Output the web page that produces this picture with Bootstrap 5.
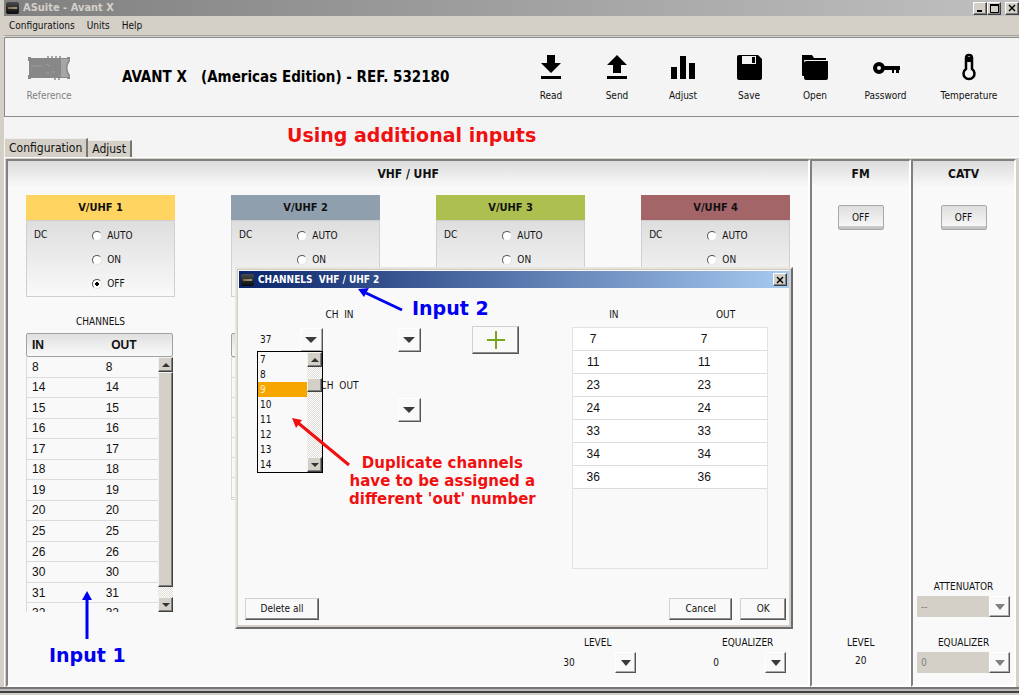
<!DOCTYPE html>
<html lang="en">
<head>
<meta charset="utf-8">
<meta name="viewport" content="width=device-width, initial-scale=1">
<title>ASuite - Avant X</title>
<link href="https://cdn.jsdelivr.net/npm/bootstrap@5.3.0/dist/css/bootstrap.min.css" rel="stylesheet">
<style>
  :root { --face: #d4d0c8; --paper: #f9f9f9; --line: #d9d9d9; }
  body { font: 10px/14px "DejaVu Sans Condensed", "DejaVu Sans", sans-serif; font-stretch: condensed; color: #111; background: var(--face); }
  button, select, input { font: inherit; color: inherit; }
  button { padding: 0; }
  .app { border-left: 4px solid var(--face); box-shadow: inset 1px 0 #fff; }
  .app-title { height: 16px; background: linear-gradient(90deg, #808080, #c0c0c0); color: var(--face); font-weight: bold; font-size: 11px; }
  .app-icon { width: 13px; height: 12px; margin: 0 4px 0 2px; border-radius: 2px; background: linear-gradient(90deg, #8a6a2c, #9a9a9a) center / 9px 2px no-repeat, linear-gradient(#4a4a4a, #0c0c0c); }
  .win-btn { width: 14px; height: 13px; background: var(--face); border: 1px solid; border-color: #fff #404040 #404040 #fff; box-shadow: inset -1px -1px #808080; display: flex; align-items: center; justify-content: center; }
  .menu { height: 20px; background: var(--face); border-bottom: 1px solid #a5a29b; padding-left: 5px; }
  .menu a { color: #111; text-decoration: none; }
  .toolbar { height: 80px; margin-top: 1px; background: #f4f4f4; border: 1px solid #8c8c8c; border-right: 0; padding: 2px 4px 0 11px; }
  .tool { width: 66px; border: 0; background: none; display: flex; flex-direction: column; align-items: center; gap: 6px; }
  .tool svg { height: 30px; width: 30px; }
  .tool .unit-pic { width: 42px; }
  .tool-ref:disabled { color: #808080; }
  .tool-pass { width: 75px; } .tool-temp { width: 92px; }
  .product { font-size: 15px; font-weight: bold; line-height: 18px; padding-bottom: 2px; white-space: pre; margin-left: 40px; color: #000; }
  .tabstrip { height: 41px; background: #f4f4f4; border-bottom: 1px solid #fff; padding-left: 1px; }
  .tab { border: 0; border-top: 1px solid #eee; border-right: 2px solid #77756f; background: var(--face); font-size: 12px; height: 19px; padding: 0 4px; }
  .tab-low { height: 17px; }
  .note { font-family: "DejaVu Sans", sans-serif; font-stretch: normal; font-weight: bold; color: #f01010; white-space: nowrap; }
  .note-big { font-size: 19px; line-height: 22px; }
  .note-mid { font-size: 15px; line-height: 18px; }
  .blue { color: #0000f0; }
  .panels { display: grid; grid-template-columns: 805fr 101fr 105fr; border-top: 1px solid var(--face); border-right: 3px solid var(--face); margin-left: 2px; height: calc(100vh - 166px); min-height: 529px; }
  .panel { background: linear-gradient(#dcdcdc, var(--paper) 26px) var(--paper); border: 2px solid; border-color: #808080 #fff #fff #808080; min-width: 0; }
  .panel-head { font-size: 12px; font-weight: bold; text-align: center; line-height: 16px; padding-top: 5px; }
  .inputs { display: grid; grid-template-columns: repeat(4, 1fr); gap: 56px; padding: 13px 18px 0; }
  .in-head { height: 25px; line-height: 26px; font-weight: bold; font-size: 11px; text-align: center; }
  .in-body { height: 77px; border: 1px solid #cfcfcf; background: linear-gradient(#dedede, var(--paper)); padding: 3px 0 0 7px; }
  .c1 { background: #ffd460; } .c2 { background: #8f9fae; } .c3 { background: #adbf4e; } .c4 { background: #a46569; }
  .dc-opts { margin-left: 45px; }
  .dc-opts label { display: flex; align-items: center; gap: 5px; height: 24px; }
  .dc-opts input { appearance: none; width: 10px; height: 10px; margin: 0; border-radius: 50%; background: #fff; border: 1px solid; border-color: #555 #e4e4e4 #e4e4e4 #555; }
  .dc-opts input:checked { background: radial-gradient(circle, #000 2px, #fff 2px); }
  .chan-title { text-align: center; line-height: 14px; padding: 18px 0 4px; }
  .grid-head { width: calc(100% - 2px); height: 24px; border: 1px solid #a2a2a2; border-radius: 2px; background: linear-gradient(#e0e0e0, var(--paper)); }
  .grid-head .first { width: 58%; }
  .head-only { margin-top: 36px; }
  .grid-box { width: calc(100% - 2px); }
  .empty-rows { height: 143px; border: 1px solid var(--line); background: repeating-linear-gradient(transparent 0 19px, #dcdcdc 19px 20px); }
  .nums { font-family: "Liberation Sans", Arial, sans-serif; font-stretch: normal; font-size: 12px; border-collapse: separate; border-spacing: 0; width: 100%; }
  .nums th, .nums td { padding: 0; font-weight: inherit; }
  .nums thead th { font-weight: bold; }
  .list-clip { height: 255px; overflow: hidden; flex: 1; border-left: 1px solid var(--line); }
  .list-clip .nums { height: 267px; }
  .nums tbody td { border-bottom: 1px solid #dcdcdc; line-height: 16px; }
  .nums .first { padding-left: 5px; }
  .list-clip .first { width: 60%; }
  .sbar { width: 15px; display: flex; flex-direction: column; background: repeating-conic-gradient(#fff 0 25%, #dedbd4 0 50%) 0 0 / 2px 2px; }
  .sbar button, .sbar .thumb { background: var(--face); border: 1px solid; border-color: #f2f2ee #404040 #404040 #f2f2ee; box-shadow: inset -1px -1px #808080; }
  .sbar .thumb { height: 215px; }
  .sbar button { height: 15px; display: flex; align-items: center; justify-content: center; flex: none; }
  .combo { position: relative; display: block; height: 21px; }
  .combo select { appearance: none; width: 100%; height: 100%; border: 0; background: transparent; padding: 0 4px; outline: 0; opacity: 1; }
  .combo::after { content: ""; position: absolute; right: 0; top: 0; width: 21px; height: 100%; background: var(--paper); border: 1px solid; border-color: #fff #555 #555 #fff; box-shadow: inset -1px -1px #aaa; pointer-events: none; }
  .combo::before { content: ""; position: absolute; z-index: 1; right: 5px; top: calc(50% - 3px); border: 5px solid transparent; border-top: 6px solid #3a3a3a; border-bottom: 0; pointer-events: none; }
  .combo.dim { background: var(--face); color: #808080; } .combo.dim::before { border-top-color: #808080; }
  .combo-tall { height: 24px; width: 65px; } .combo-tall::after { width: 23px; } .combo-tall::before { right: 6px; border-left-width: 6px; border-right-width: 6px; }
  .combo-tall select { padding: 0 2px; }
  .levels { padding: 0 22px 12px 0; gap: 73px; }
  .levels .combo { width: 77px; }
  .levels label, .side label { line-height: 14px; display: block; text-align: center; margin-bottom: 2px; }
  .catv-foot { padding: 0 4px 12px; }
  .fm-foot { padding-bottom: 17px; }
  .gap-under { margin-bottom: 19px; }
  .toggle { width: 46px; height: 25px; border: 1px solid #a8a8a8; border-radius: 2px; background: linear-gradient(#dedede, #f6f6f6 85%, #c4c4c4 90%); margin: 23px auto 0; display: block; }
  .win { position: absolute; left: 227px; right: 15px; top: 106px; height: 362px; background: var(--paper); border: 2px solid; border-color: #e8e5dd #6c6c6c #6c6c6c #e8e5dd; box-shadow: inset 1px 1px #d0ccc4, inset -2px -2px var(--face); padding: 2px; display: flex; flex-direction: column; z-index: 2; }
  .win-title { height: 17px; background: linear-gradient(90deg, #0a246a, #a6caf0); color: #fff; font-weight: bold; white-space: pre; padding-right: 2px; }
  .win-body { display: flex; justify-content: space-between; padding: 20px 21px 0 19px; }
  .ch-block { width: 163px; position: relative; }
  .ch-row { margin-top: 6px; }
  .ch-out { margin-top: 27px; margin-bottom: 5px; }
  .raised { background: var(--paper); border: 1px solid; border-color: #d5d2cc #555 #555 #d5d2cc; box-shadow: inset -1px -1px #8c8c8c; height: 22px; }
  .w-del { width: 74px; } .w-cancel { width: 63px; } .w-ok { width: 46px; }
  .win-foot { padding: 0 3px 5px 6px; }
  .add { width: 47px; height: 28px; margin: 18px 0 0 51px; display: flex; align-items: center; justify-content: center; }
  .drop { position: absolute; left: -1px; top: 43px; width: 66px; height: 122px; border: 1px solid #000; background: var(--paper); display: flex; z-index: 3; }
  .drop ul { flex: 1; margin: 0; padding: 0; list-style: none; }
  .drop li { height: 15px; line-height: 16px; padding-left: 2px; }
  .drop li.on { background: #f7a600; color: #fff3c0; }
  .drop .thumb { height: 14px; margin-top: 11px; }
  .map { width: 196px; }
  .map-heads { justify-content: space-between; padding: 0 33px 0 37px; }
  .map-box { height: 242px; margin-top: 5px; border: 1px solid #e2e2e2; }
  .map-box td { height: 23px; background: #fff; text-align: center; }
  .map-box td:first-child { width: 86px; padding-right: 46px; } .map-box td:last-child { padding-right: 18px; }
  .mark-lay { position: absolute; z-index: 5; pointer-events: none; }
  .frame-foot { height: 6px; border-top: 2px solid #77756f; border-bottom: 2px solid #404040; background: #bbb; margin-left: -4px; }
</style>
</head>
<body>
<div class="app">
  <header>
    <div class="app-title d-flex align-items-center">
      <span class="app-icon" aria-hidden="true"></span><span>ASuite - Avant X</span>
      <button class="win-btn ms-auto" aria-label="Minimize"><svg width="8" height="8"><path d="M1 7h5" stroke="#000" stroke-width="2"/></svg></button>
      <button class="win-btn" aria-label="Maximize"><svg width="9" height="9"><path d="M.5 1v7.500h8V1" fill="none" stroke="#000"/><path d="M0 1h9" stroke="#000" stroke-width="2"/></svg></button>
      <button class="win-btn ms-1" aria-label="Close"><svg width="8" height="8"><path d="M1 1l6 6M7 1l-6 6" stroke="#000" stroke-width="1.500"/></svg></button>
    </div>
    <nav class="menu d-flex align-items-center gap-2">
      <a href="#" class="me-1">Configurations</a><a href="#" class="me-1">Units</a><a href="#">Help</a>
    </nav>
    <div class="toolbar d-flex align-items-center">
      <button class="tool tool-ref" disabled>
        <svg class="unit-pic" viewBox="0 0 42 30"><path d="M0 4h3v1h36V4h3v4q-5 7 0 14v4h-3v-1H3v1H0v-4h1V8H0z" fill="#888"/><path d="M33 6h8q-6 9 0 18h-8z" fill="#a6a6a6"/><path d="M20 3v4M24 3v4M28 3v4M32 3v4M27 24v3M31 24v3" stroke="#888" stroke-width="1.500"/><path d="M3 13h11M18 11l4 2M24 19h3M18 20h3" stroke="#9c9c9c"/></svg>
        <span>Reference</span></button>
      <h1 class="product mb-0">AVANT X   (Americas Edition) - REF. 532180</h1>
      <div class="d-flex ms-auto">
        <button class="tool"><svg viewBox="0 0 30 30"><path d="M11 2h8v8h6L15 20 5 10h6z"/><path d="M5 23h20v3H5z"/></svg><span>Read</span></button>
        <button class="tool"><svg viewBox="0 0 30 30"><path d="M15 2l10 10h-6v8h-8v-8H5z"/><path d="M5 23h20v3H5z"/></svg><span>Send</span></button>
        <button class="tool"><svg viewBox="0 0 30 30"><path d="M3 14h6v12H3zM12 3h6v23h-6zM21 10h6v16h-6z"/></svg><span>Adjust</span></button>
        <button class="tool"><svg viewBox="0 0 30 30"><path fill-rule="evenodd" d="M5 2h19l4 4v19q0 2-2 2H5q-2 0-2-2V4q0-2 2-2zm3 1v8h14V3zm10 1h3v6h-3z"/></svg><span>Save</span></button>
        <button class="tool"><svg viewBox="0 0 30 30"><path d="M2 2h10l2 3h12v2H5q-1 0-1 1v15H3q-1 0-1-1z"/><path d="M6 8h22v17q0 2-2 2H6q-2 0-2-2V9z"/></svg><span>Open</span></button>
        <button class="tool tool-pass"><svg viewBox="0 0 30 30"><circle cx="8" cy="15" r="4" fill="none" stroke="#000" stroke-width="4"/><path d="M12 13h17v4h-1v3h-3v-3h-2v3h-2v-3h-9z"/></svg><span>Password</span></button>
        <button class="tool tool-temp"><svg viewBox="0 0 30 30"><path d="M12 16V5q0-3 3-3t3 3v11a5.500 5.500 0 1 1-6 0z" fill="#f4f4f4" stroke="#000" stroke-width="2.500"/><path d="M12 4h6v5h-6z"/></svg><span>Temperature</span></button>
      </div>
    </div>
  </header>
  <div class="tabstrip d-flex align-items-end position-relative">
    <button class="tab">Configuration</button><button class="tab tab-low">Adjust</button>
    <div class="mark-lay note note-big" style="left:283px;top:7px">Using additional inputs</div>
  </div>
  <main class="panels">
    <section class="panel position-relative d-flex flex-column">
      <div class="panel-head">VHF / UHF</div>
      <div class="inputs">
        <div>
          <div class="in-head c1">V/UHF 1</div>
          <div class="in-body d-flex"><span class="pt-1">DC</span>
            <div class="dc-opts"><label><input type="radio" name="d1">AUTO</label><label><input type="radio" name="d1">ON</label><label><input type="radio" name="d1" checked>OFF</label></div></div>
          <div class="chan-title">CHANNELS</div>
          <div class="grid-head d-flex align-items-center"><table class="nums"><thead><tr><th class="first">IN</th><th>OUT</th></tr></thead></table></div>
          <div class="grid-box d-flex">
            <div class="list-clip"><table class="nums"><tbody>
              <tr><td class="first">8</td><td>8</td></tr><tr><td class="first">14</td><td>14</td></tr><tr><td class="first">15</td><td>15</td></tr><tr><td class="first">16</td><td>16</td></tr><tr><td class="first">17</td><td>17</td></tr><tr><td class="first">18</td><td>18</td></tr><tr><td class="first">19</td><td>19</td></tr><tr><td class="first">20</td><td>20</td></tr><tr><td class="first">25</td><td>25</td></tr><tr><td class="first">26</td><td>26</td></tr><tr><td class="first">30</td><td>30</td></tr><tr><td class="first">31</td><td>31</td></tr><tr><td class="first">32</td><td>32</td></tr>
            </tbody></table></div>
            <div class="sbar"><button aria-label="Scroll up"><svg width="8" height="4"><path d="M0 4l4-4 4 4z" fill="#333"/></svg></button><div class="thumb"></div><button class="mt-auto" aria-label="Scroll down"><svg width="8" height="4"><path d="M0 0l4 4 4-4z" fill="#333"/></svg></button></div>
          </div>
        </div>
        <div>
          <div class="in-head c2">V/UHF 2</div>
          <div class="in-body d-flex"><span class="pt-1">DC</span>
            <div class="dc-opts"><label><input type="radio" name="d2">AUTO</label><label><input type="radio" name="d2">ON</label></div></div>
          <div class="grid-head head-only"></div>
          <div class="grid-box empty-rows"></div>
        </div>
        <div>
          <div class="in-head c3">V/UHF 3</div>
          <div class="in-body d-flex"><span class="pt-1">DC</span>
            <div class="dc-opts"><label><input type="radio" name="d3">AUTO</label><label><input type="radio" name="d3">ON</label></div></div>
        </div>
        <div>
          <div class="in-head c4">V/UHF 4</div>
          <div class="in-body d-flex"><span class="pt-1">DC</span>
            <div class="dc-opts"><label><input type="radio" name="d4">AUTO</label><label><input type="radio" name="d4">ON</label></div></div>
        </div>
      </div>
      <div class="levels d-flex justify-content-end mt-auto">
        <div><label for="lv">LEVEL</label><div class="combo"><select id="lv"><option>30</option></select></div></div>
        <div><label for="eq">EQUALIZER</label><div class="combo"><select id="eq"><option>0</option></select></div></div>
      </div>

      <div class="win" role="dialog" aria-labelledby="wt">
        <div class="win-title d-flex align-items-center"><span class="app-icon"></span><span id="wt">CHANNELS  VHF / UHF 2</span><button class="win-btn ms-auto" aria-label="Close"><svg width="8" height="8"><path d="M1 1l6 6M7 1l-6 6" stroke="#000" stroke-width="1.500"/></svg></button></div>
        <div class="win-body">
          <div class="d-flex align-items-start">
            <div class="ch-block">
              <div class="text-center">CH&nbsp; IN</div>
              <div class="ch-row d-flex justify-content-between">
                <div class="combo combo-tall"><select aria-label="Channel in, from"><option>37</option></select></div>
                <div class="combo combo-tall"><select aria-label="Channel in, to"><option></option></select></div>
              </div>
              <div class="ch-out text-center">CH&nbsp; OUT</div>
              <div class="combo combo-tall ms-auto"><select aria-label="Channel out"><option></option></select></div>
              <div class="drop">
                <ul role="listbox" aria-label="Channels"><li role="option">7</li><li role="option">8</li><li role="option" class="on" aria-selected="true">9</li><li role="option">10</li><li role="option">11</li><li role="option">12</li><li role="option">13</li><li role="option">14</li></ul>
                <div class="sbar"><button aria-label="Scroll up"><svg width="8" height="4"><path d="M0 4l4-4 4 4z" fill="#333"/></svg></button><div class="thumb"></div><button class="mt-auto" aria-label="Scroll down"><svg width="8" height="4"><path d="M0 0l4 4 4-4z" fill="#333"/></svg></button></div>
              </div>
            </div>
            <button class="raised add" aria-label="Add"><svg width="18" height="18"><path d="M9 0v18M0 9h18" stroke="#7aa51e" stroke-width="2"/></svg></button>
          </div>
          <div class="map">
            <div class="map-heads d-flex"><span>IN</span><span>OUT</span></div>
            <div class="map-box"><table class="nums"><tbody>
              <tr><td>7</td><td>7</td></tr><tr><td>11</td><td>11</td></tr><tr><td>23</td><td>23</td></tr><tr><td>24</td><td>24</td></tr><tr><td>33</td><td>33</td></tr><tr><td>34</td><td>34</td></tr><tr><td>36</td><td>36</td></tr>
            </tbody></table></div>
          </div>
        </div>
        <div class="win-foot d-flex mt-auto">
          <button class="raised w-del">Delete all</button>
          <button class="raised w-cancel ms-auto me-2">Cancel</button>
          <button class="raised w-ok">OK</button>
        </div>
      </div>

      <svg class="mark-lay" style="left:70px;top:430px" width="18" height="48"><path d="M9 48V8" stroke="#0000f0" stroke-width="3"/><path d="M9 0l5 9H4z" fill="#0000f0"/></svg>
      <div class="mark-lay note note-big blue" style="left:41px;top:483px">Input 1</div>
      <svg class="mark-lay" style="left:350px;top:126px" width="46" height="26"><path d="M44 23L8 6" stroke="#0000f0" stroke-width="3"/><path d="M0 2l11-1-5 9z" fill="#0000f0"/></svg>
      <div class="mark-lay note note-big blue" style="left:404px;top:136px">Input 2</div>
      <svg class="mark-lay" style="left:283px;top:256px" width="62" height="52"><path d="M58 48L6 5" stroke="#f01010" stroke-width="3"/><path d="M1 1l10 2-6 8z" fill="#f01010"/></svg>
      <div class="mark-lay note note-mid text-center" style="left:341px;top:293px">Duplicate channels<br>have to be assigned a<br>different 'out' number</div>
    </section>
    <section class="panel side d-flex flex-column">
      <div class="panel-head">FM</div><button class="toggle">OFF</button>
      <div class="fm-foot mt-auto text-center"><div class="mb-1">LEVEL</div><div>20</div></div>
    </section>
    <section class="panel side d-flex flex-column">
      <div class="panel-head">CATV</div><button class="toggle">OFF</button>
      <div class="catv-foot mt-auto">
        <label for="at">ATTENUATOR</label><div class="combo dim gap-under"><select id="at" disabled><option>--</option></select></div>
        <label for="eq2">EQUALIZER</label><div class="combo dim"><select id="eq2" disabled><option>0</option></select></div>
      </div>
    </section>
  </main>
  <footer class="frame-foot"></footer>
</div>
<script src="https://cdn.jsdelivr.net/npm/bootstrap@5.3.0/dist/js/bootstrap.bundle.min.js"></script>
</body>
</html>
